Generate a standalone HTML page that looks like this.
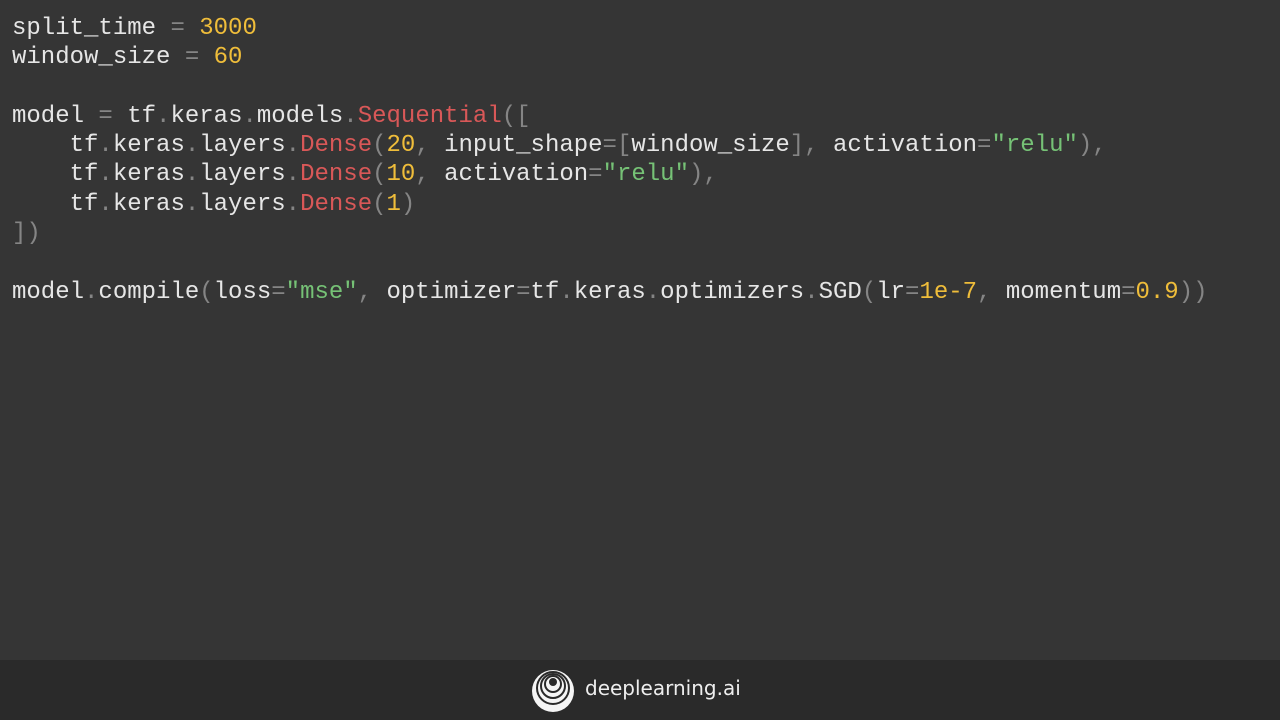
<!DOCTYPE html>
<html><head><meta charset="utf-8"><style>
html,body{margin:0;padding:0;width:1280px;height:720px;overflow:hidden;background:#353535}
pre{position:absolute;left:12px;top:14px;margin:0;font-family:"Liberation Mono",monospace;font-size:24px;line-height:29.3px;color:#e6e6e6}
.p{color:#858585}.r{color:#d95858}.y{color:#efbd3a}.g{color:#76c276}
.foot{position:absolute;left:0;top:660px;width:1280px;height:60px;background:#2a2a2a}
.logo{position:absolute;left:531px;top:669px}
.brand{position:absolute;left:585px;top:676px;font-family:"DejaVu Sans","Liberation Sans",sans-serif;font-size:20px;color:#eeeeee}
</style></head><body>
<pre>split_time <span class="p">=</span> <span class="y">3000</span>
window_size <span class="p">=</span> <span class="y">60</span>

model <span class="p">=</span> tf<span class="p">.</span>keras<span class="p">.</span>models<span class="p">.</span><span class="r">Sequential</span><span class="p">([</span>
    tf<span class="p">.</span>keras<span class="p">.</span>layers<span class="p">.</span><span class="r">Dense</span><span class="p">(</span><span class="y">20</span><span class="p">,</span> input_shape<span class="p">=[</span>window_size<span class="p">],</span> activation<span class="p">=</span><span class="g">"relu"</span><span class="p">),</span>
    tf<span class="p">.</span>keras<span class="p">.</span>layers<span class="p">.</span><span class="r">Dense</span><span class="p">(</span><span class="y">10</span><span class="p">,</span> activation<span class="p">=</span><span class="g">"relu"</span><span class="p">),</span>
    tf<span class="p">.</span>keras<span class="p">.</span>layers<span class="p">.</span><span class="r">Dense</span><span class="p">(</span><span class="y">1</span><span class="p">)</span>
<span class="p">])</span>

model<span class="p">.</span>compile<span class="p">(</span>loss<span class="p">=</span><span class="g">"mse"</span><span class="p">,</span> optimizer<span class="p">=</span>tf<span class="p">.</span>keras<span class="p">.</span>optimizers<span class="p">.</span>SGD<span class="p">(</span>lr<span class="p">=</span><span class="y">1e-7</span><span class="p">,</span> momentum<span class="p">=</span><span class="y">0.9</span><span class="p">))</span></pre>
<div class="foot"></div>
<svg class="logo" width="44" height="44" viewBox="0 0 44 44">
<circle cx="22" cy="22" r="21" fill="#f5f5f5"/>
<circle cx="22" cy="19" r="16" fill="none" stroke="#2a2a2a" stroke-width="2"/>
<circle cx="22" cy="17" r="12" fill="none" stroke="#2a2a2a" stroke-width="2"/>
<circle cx="22" cy="15" r="8" fill="none" stroke="#2a2a2a" stroke-width="2"/>
<circle cx="22" cy="13" r="4" fill="#2a2a2a"/>
</svg>
<div class="brand">deeplearning.ai</div>
</body></html>
